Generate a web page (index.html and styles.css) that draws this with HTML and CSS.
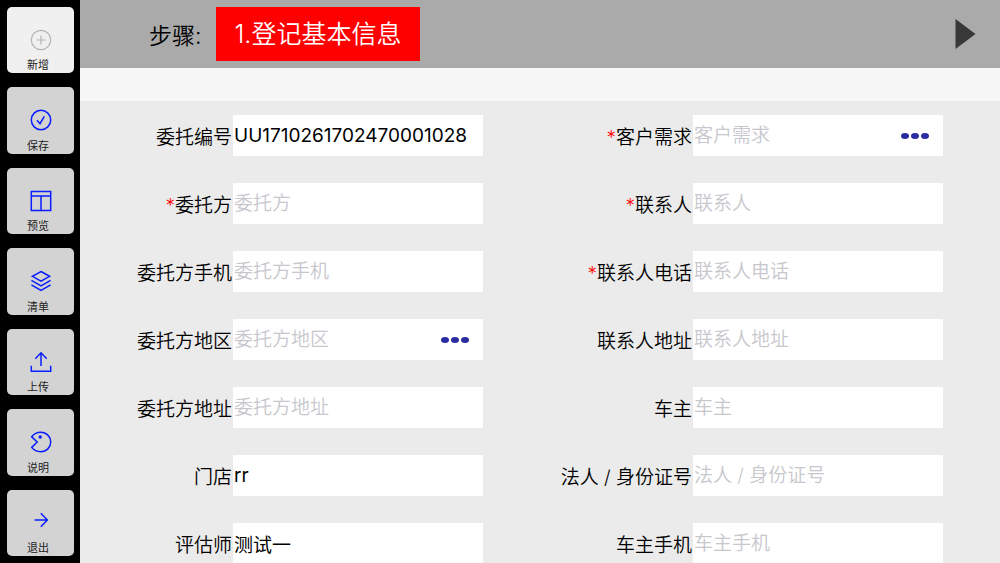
FILE: index.html
```
<!doctype html>
<html lang="zh-CN">
<head>
    <meta charset="utf-8">
    <meta name="viewport" content="width=device-width, initial-scale=1">
    <title>登记基本信息</title>
    <link rel="stylesheet" href="styles.css">
</head>
<body>

<nav class="sidebar">
    <button class="tool" type="button" disabled>
        <svg class="icon" viewBox="0 0 22 22"><circle cx="11" cy="11" r="9.7"/><path d="M11 6.5v9M6.5 11h9"/></svg>
        <span>新增</span>
    </button>
    <button class="tool" type="button">
        <svg class="icon" viewBox="0 0 22 22"><circle cx="11" cy="11" r="9.7"/><path d="M7 11.2l3 3.5 4.3-7.4"/></svg>
        <span>保存</span>
    </button>
    <button class="tool" type="button">
        <svg class="icon" viewBox="0 0 22 22"><path d="M1.3 1.5h19.4v19H1.3zM1.3 6h19.4M11 6v14.5"/></svg>
        <span>预览</span>
    </button>
    <button class="tool" type="button">
        <svg class="icon" viewBox="0 0 22 22"><path d="M11 1.5l8.6 4.8-8.6 4.8-8.6-4.8zM1.4 10.4l9.6 5.4 9.6-5.4M1.4 14.9l9.6 5.4 9.6-5.4"/></svg>
        <span>清单</span>
    </button>
    <button class="tool" type="button">
        <svg class="icon" viewBox="0 0 22 22"><path d="M1.3 14.8v5.5h19.4v-5.5M11 15V1.8M5.3 7.7L11 1.8l5.7 5.9"/></svg>
        <span>上传</span>
    </button>
    <button class="tool" type="button">
        <svg class="icon" viewBox="0 0 22 22"><path d="M1.7 5.8C4 2.8 7 1.3 10.8 1.3c5.7 0 9.9 4.3 9.9 9.7s-4.2 9.7-9.9 9.7c-3.8 0-6.8-1.4-9.1-4.3L7.2 11z"/><circle class="dot" cx="10.2" cy="6" r="1.7"/></svg>
        <span>说明</span>
    </button>
    <button class="tool" type="button">
        <svg class="icon" viewBox="0 0 22 22"><path d="M4.5 8h12.7M10.8 1.3l6.6 6.7-6.6 6.7"/></svg>
        <span>退出</span>
    </button>
</nav>

<main class="main">
    <header class="steps">
        <span class="steps-label">步骤:</span>
        <button class="step" type="button">1.登记基本信息</button>
        <button class="next" type="button" aria-label="下一步">
            <svg viewBox="0 0 20 30"><path d="M0 0l20 15L0 30z"/></svg>
        </button>
    </header>

    <form class="form">
        <div class="field">
            <label for="code">委托编号</label>
            <div class="box"><input id="code" type="text" value="UU1710261702470001028"></div>
        </div>
        <div class="field">
            <label for="demand"><span class="required">*</span>客户需求</label>
            <div class="box">
                <input id="demand" type="text" placeholder="客户需求">
                <button class="more" type="button" aria-label="选择客户需求"><i></i><i></i><i></i></button>
            </div>
        </div>
        <div class="field">
            <label for="client"><span class="required">*</span>委托方</label>
            <div class="box"><input id="client" type="text" placeholder="委托方"></div>
        </div>
        <div class="field">
            <label for="contact"><span class="required">*</span>联系人</label>
            <div class="box"><input id="contact" type="text" placeholder="联系人"></div>
        </div>
        <div class="field">
            <label for="client-mobile">委托方手机</label>
            <div class="box"><input id="client-mobile" type="text" placeholder="委托方手机"></div>
        </div>
        <div class="field">
            <label for="contact-phone"><span class="required">*</span>联系人电话</label>
            <div class="box"><input id="contact-phone" type="text" placeholder="联系人电话"></div>
        </div>
        <div class="field">
            <label for="client-area">委托方地区</label>
            <div class="box">
                <input id="client-area" type="text" placeholder="委托方地区">
                <button class="more" type="button" aria-label="选择委托方地区"><i></i><i></i><i></i></button>
            </div>
        </div>
        <div class="field">
            <label for="contact-address">联系人地址</label>
            <div class="box"><input id="contact-address" type="text" placeholder="联系人地址"></div>
        </div>
        <div class="field">
            <label for="client-address">委托方地址</label>
            <div class="box"><input id="client-address" type="text" placeholder="委托方地址"></div>
        </div>
        <div class="field">
            <label for="owner">车主</label>
            <div class="box"><input id="owner" type="text" placeholder="车主"></div>
        </div>
        <div class="field">
            <label for="store">门店</label>
            <div class="box"><input id="store" type="text" value="rr"></div>
        </div>
        <div class="field">
            <label for="owner-id">法人 / 身份证号</label>
            <div class="box"><input id="owner-id" type="text" placeholder="法人 / 身份证号"></div>
        </div>
        <div class="field">
            <label for="appraiser">评估师</label>
            <div class="box"><input id="appraiser" type="text" value="测试一"></div>
        </div>
        <div class="field">
            <label for="owner-mobile">车主手机</label>
            <div class="box"><input id="owner-mobile" type="text" placeholder="车主手机"></div>
        </div>
    </form>
</main>

</body>
</html>
```
FILE: styles.css
```
* { box-sizing: border-box; }
body {
    margin: 0;
    display: flex;
    height: 100vh;
    overflow: hidden;
    background: #ebebeb;
    color: #000;
    font-family: Inter, "Noto Sans CJK SC", sans-serif;
    font-size: 19px;
    font-weight: 400;
}
button, input { font: inherit; color: inherit; border: 0; padding: 0; margin: 0; }
button { cursor: pointer; }

/* left toolbar */
.sidebar {
    flex: none;
    width: 80px;
    display: grid;
    grid-auto-rows: 1fr;
    background: #000;
}
.tool {
    margin: 7px 6px 7px 7px;
    padding-top: 14px;
    display: flex;
    flex-direction: column;
    align-items: center;
    justify-content: space-between;
    border-radius: 5px;
    background: #d3d3d3;
    color: #222;
    font-size: 11px;
    line-height: 16px;
}
.tool span { padding-right: 5px; }
.tool:disabled { background: #f0f0f0; }
.icon {
    margin-top: 8px;
    width: 22px;
    height: 22px;
    fill: none;
    stroke: #0a1eff;
    stroke-width: 1.5;
}
.icon .dot { fill: #0a1eff; stroke: none; }
.tool:disabled .icon { stroke: #b4b4b4; stroke-width: 1.2; }

.main { flex: 1; min-width: 0; }

/* step bar */
.steps {
    display: flex;
    align-items: center;
    height: 68px;
    padding: 0 24px 0 69px;
    background: #aaa;
}
.steps-label { margin-right: 14px; font-size: 23px; font-weight: 350; }
.step {
    height: 54px;
    padding: 0 19px 4px;
    background: #f00;
    color: #fff;
    font-size: 25px;
    font-weight: 350;
}
.next { margin-left: auto; background: none; }
.next svg { display: block; width: 21px; height: 30px; fill: #383838; }

/* entry form */
.form {
    display: grid;
    grid-template-columns: repeat(2, minmax(0, 1fr));
    row-gap: 27px;
    padding-top: 14px;
    border-top: 33px solid #f7f7f7;
}
.field {
    display: grid;
    grid-template-columns: 153fr minmax(0, 250fr) 57fr;
}
.field label {
    padding: 4px 1px 0 0;
    text-align: right;
    line-height: 37px;
    white-space: nowrap;
    font-weight: 350;
}
.required { color: #f00; }
.box {
    display: flex;
    height: 41px;
    background: #fff;
}
.box input {
    flex: 1;
    min-width: 0;
    padding: 0 0 1px 1px;
    background: none;
    outline: 0;
}
.box input::placeholder { color: #c7c7cd; opacity: 1; font-weight: 350; }
.more {
    display: flex;
    align-items: center;
    gap: 2px;
    padding: 0 14px;
    background: none;
}
.more i {
    width: 8px;
    height: 6px;
    border-radius: 50%;
    background: #2b2ba0;
}
```
